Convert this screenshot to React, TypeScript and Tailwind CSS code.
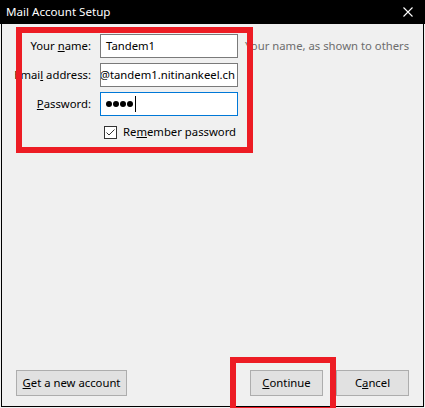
import React from "react";

const font = { fontFamily: '"Noto Sans", "Open Sans", sans-serif' };

const Row = ({ label, children }: { label: React.ReactNode; children: React.ReactNode }) => (
  <div className="flex items-center h-[24px]">
    <div className="w-[89px] shrink-0 flex justify-end whitespace-nowrap text-[11.3px] text-black">
      <span>{label}</span>
    </div>
    {children}
  </div>
);

const Btn = ({ children, w }: { children: React.ReactNode; w: string }) => (
  <button
    className={`${w} h-[26px] bg-[#e1e1e1] border border-[#adadad] text-[11.3px] text-black flex items-center justify-center`}
  >
    {children}
  </button>
);

export default function App() {
  return (
    <div className="relative w-[425px] h-[408px] bg-[#f0f0f0] overflow-hidden" style={font}>
      {/* title bar */}
      <div className="h-[24px] bg-black flex items-center justify-between pl-[6px] pr-[12px]">
        <span className="text-white text-[11.6px] leading-none">Mail Account Setup</span>
        <svg width="10" height="10" viewBox="0 0 10 10">
          <path d="M0.5 0.5 L9.5 9.5 M9.5 0.5 L0.5 9.5" stroke="#fff" strokeWidth="1.1" />
        </svg>
      </div>

      {/* window body */}
      <div className="ml-px w-[423px] h-[383px] border-x border-b border-black flex flex-col">
        <div className="pt-[10px] flex flex-col gap-[5px]">
          <Row
            label={
              <>
                Your <span className="underline">n</span>ame:
              </>
            }
          >
            <div className="ml-[9px] w-[138px] h-[24px] bg-white border border-[#7a7a7a] flex items-center pl-[5px] text-[11.3px] text-black">
              Tandem1
            </div>
            <span className="ml-[7px] text-[11.3px] text-[#6d6d6d] whitespace-nowrap">
              Your name, as shown to others
            </span>
          </Row>
          <Row
            label={
              <>
                Emai<span className="underline">l</span> address:
              </>
            }
          >
            <div className="ml-[9px] w-[138px] h-[24px] bg-white border border-[#7a7a7a] flex items-center justify-end pr-[2px] overflow-hidden whitespace-nowrap text-[11.3px] text-black">
              <span>info@tandem1.nitinankeel.ch</span>
            </div>
          </Row>
          <Row
            label={
              <>
                <span className="underline">P</span>assword:
              </>
            }
          >
            <div className="ml-[9px] w-[138px] h-[24px] bg-white border border-[#0078d7] flex items-center pl-[5px] gap-[1px]">
              <span className="w-[6px] h-[6px] rounded-full bg-black" />
              <span className="w-[6px] h-[6px] rounded-full bg-black" />
              <span className="w-[6px] h-[6px] rounded-full bg-black" />
              <span className="w-[6px] h-[6px] rounded-full bg-black" />
              <span className="ml-[1px] w-px h-[16px] bg-black" />
            </div>
          </Row>
        </div>

        <div className="mt-[10px] ml-[102px] flex items-center h-[13px]">
          <svg width="13" height="13" viewBox="0 0 13 13">
            <rect x="0.5" y="0.5" width="12" height="12" fill="#fff" stroke="#333" />
            <path d="M2.5 6.5 L5 9 L10.5 3.5" fill="none" stroke="#333" strokeWidth="1" />
          </svg>
          <span className="ml-[6px] text-[11.3px] text-black whitespace-nowrap">
            Re<span className="underline">m</span>ember password
          </span>
        </div>

        <div className="flex-1" />

        <div className="flex items-center pl-[14px] pr-[14px] pb-[10px]">
          <Btn w="w-[111px]">
            <span>
              <span className="underline">G</span>et a new account
            </span>
          </Btn>
          <div className="flex-1" />
          <div className="flex gap-[13px]">
            <Btn w="w-[73px]">
              <span>
                <span className="underline">C</span>ontinue
              </span>
            </Btn>
            <Btn w="w-[73px]">
              <span>
                C<span className="underline">a</span>ncel
              </span>
            </Btn>
          </div>
        </div>
      </div>

      {/* red annotation boxes */}
      <div className="absolute left-[16px] top-[27px] w-[237px] h-[126px] border-[6px] border-[#ed1c24]" />
      <div className="absolute left-[230px] top-[357px] w-[106px] h-[56px] border-[6px] border-[#ed1c24]" />
    </div>
  );
}
